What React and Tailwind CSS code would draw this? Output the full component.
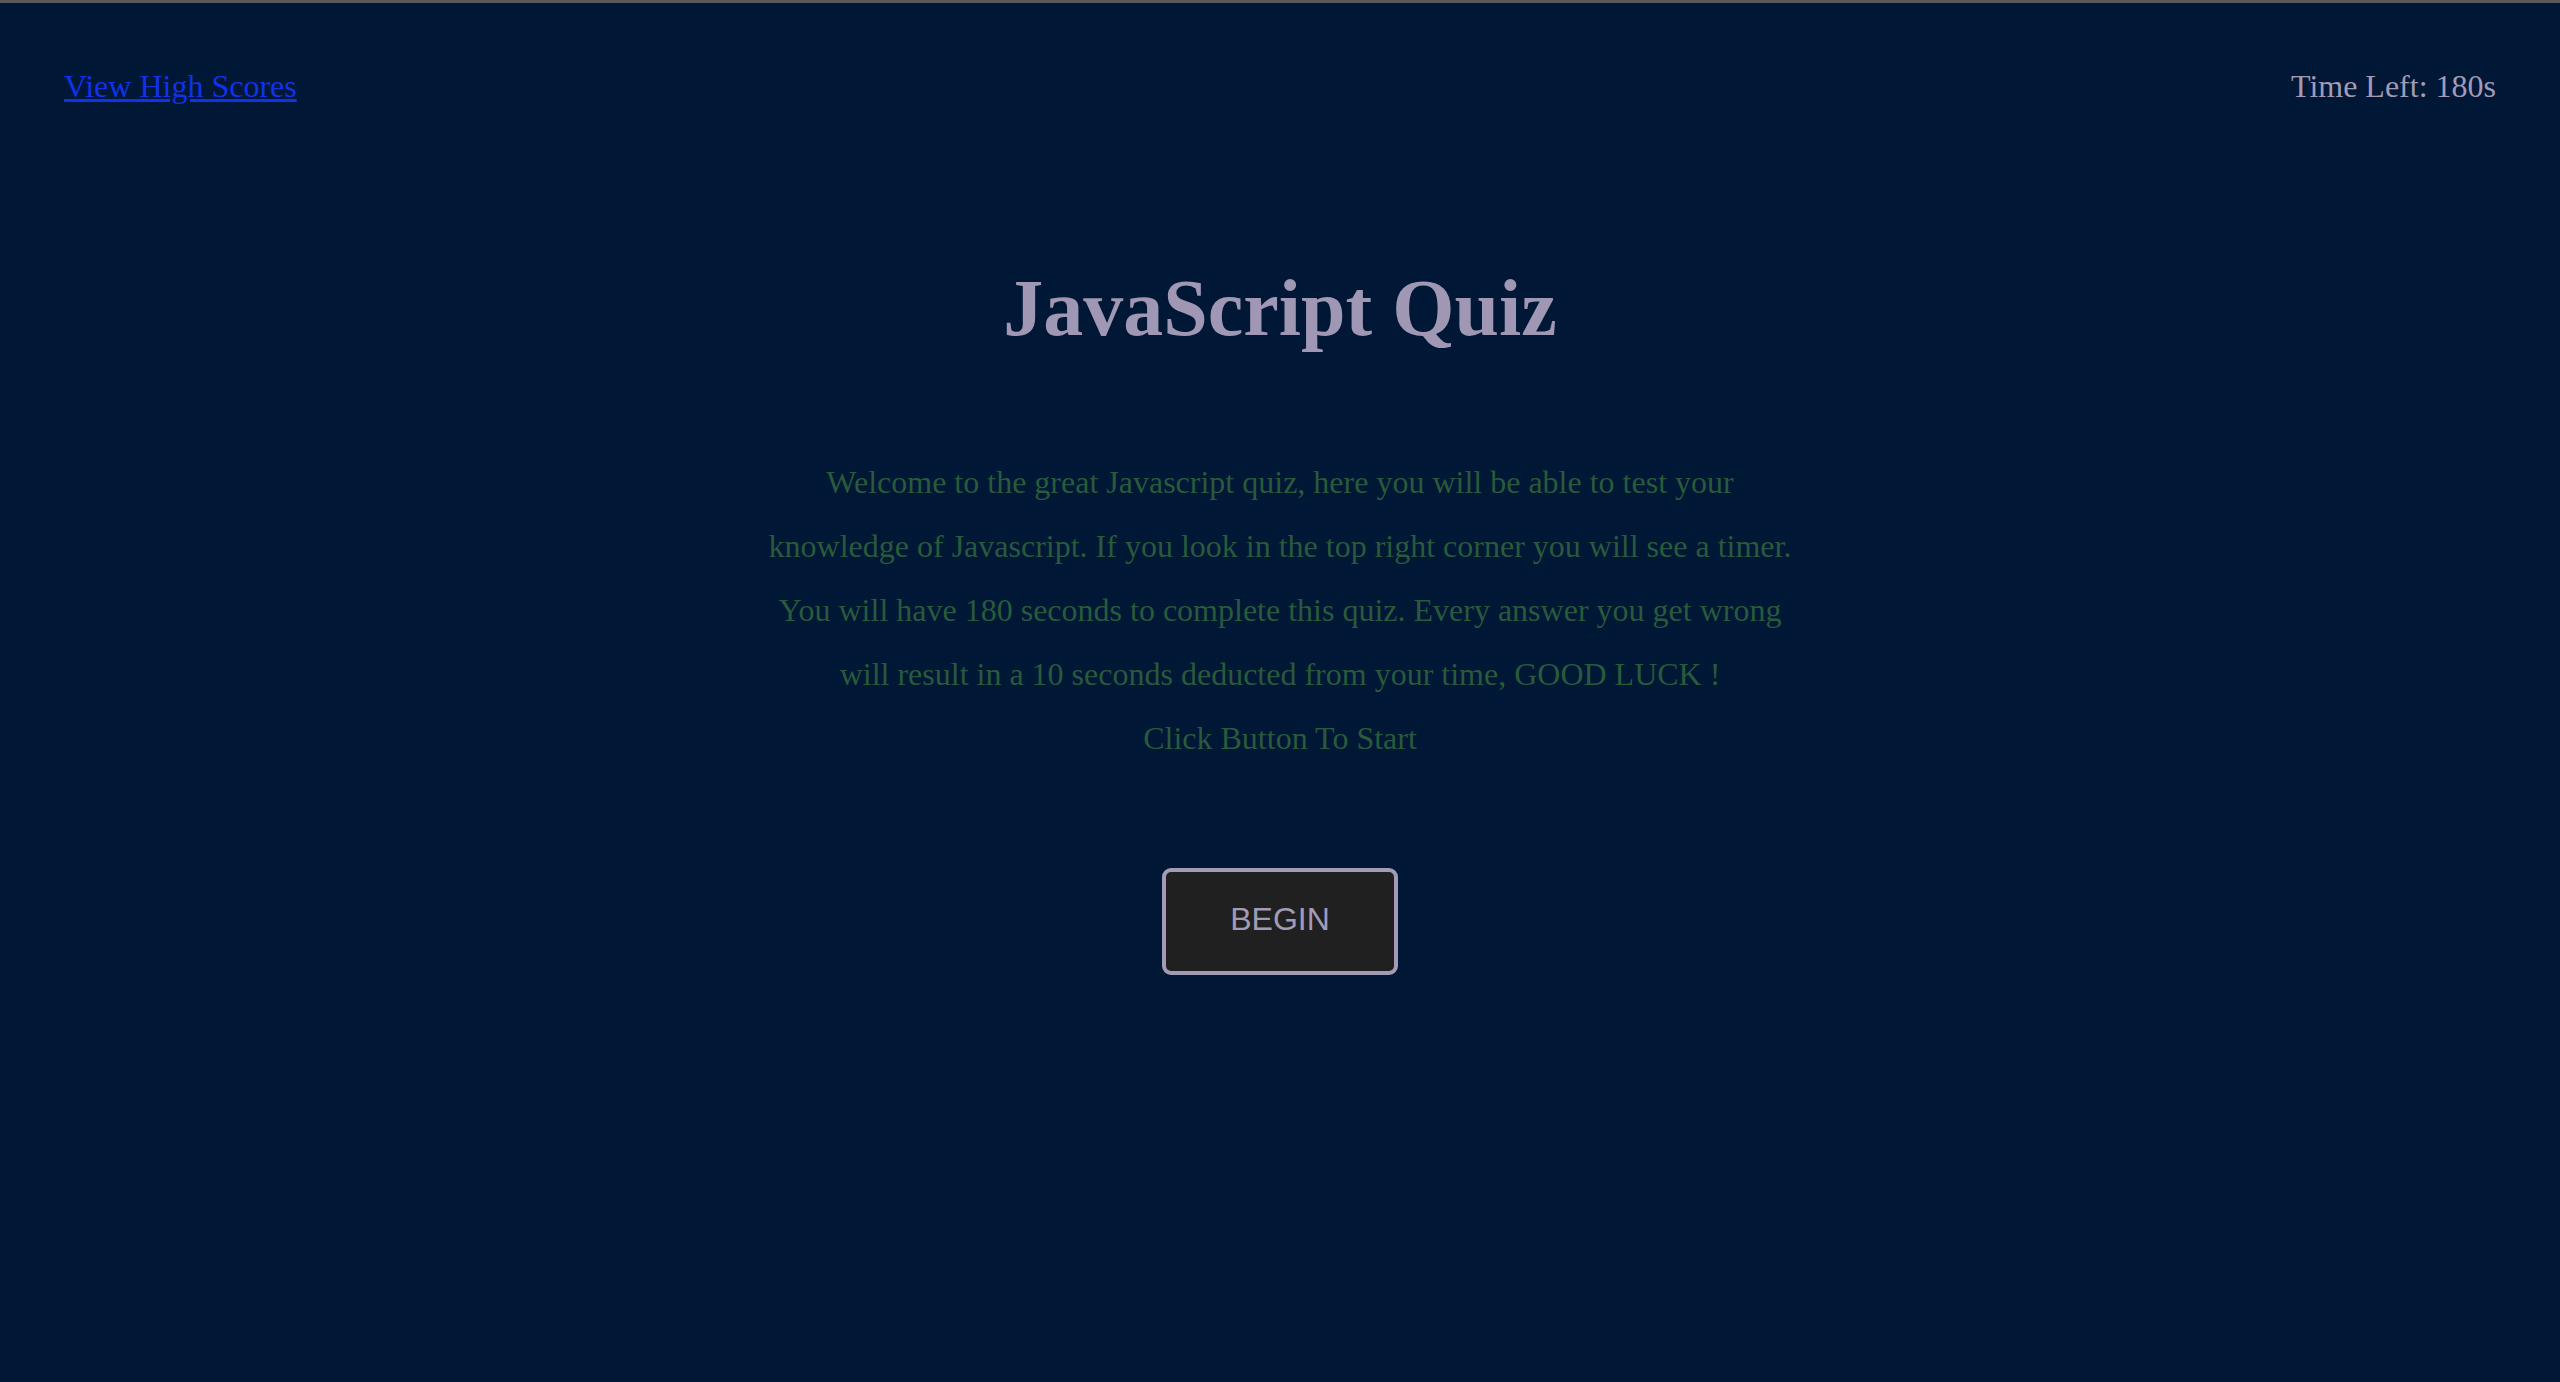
export default function App() {
  return (
    <div className="h-screen w-full bg-[#001736] flex flex-col overflow-hidden" style={{ fontFamily: '"Liberation Serif", "Times New Roman", serif' }}>
      <div className="h-[3px] w-full bg-[#595959] shrink-0" />
      <header className="flex justify-between items-start px-16 pt-[65px] text-[32px] leading-[36px]">
        <a href="#" className="text-[#1232e8] underline">View High Scores</a>
        <div className="text-[#a29bb5]">Time Left: 180s</div>
      </header>
      <main className="flex flex-col items-center">
        <h1 className="mt-[160px] text-[80px] leading-[88px] font-bold text-[#9f97b3]">JavaScript Quiz</h1>
        <div className="mt-[98px] w-[1040px] text-center text-[32px] leading-[64px] text-[#295a3b]">
          <p>Welcome to the great Javascript quiz, here you will be able to test your knowledge of Javascript. If you look in the top right corner you will see a timer. You will have 180 seconds to complete this quiz. Every answer you get wrong will result in a 10 seconds deducted from your time, GOOD LUCK !</p>
          <p>Click Button To Start</p>
        </div>
        <button
          className="mt-[98px] w-[236px] h-[107px] pb-[5px] bg-[#202020] border-4 border-[#a39bb5] rounded-[9px] text-[#a39bb5] text-[32px] leading-[36px] flex items-center justify-center"
          style={{ fontFamily: '"Liberation Sans", Arial, sans-serif' }}
        >
          BEGIN
        </button>
      </main>
    </div>
  );
}
